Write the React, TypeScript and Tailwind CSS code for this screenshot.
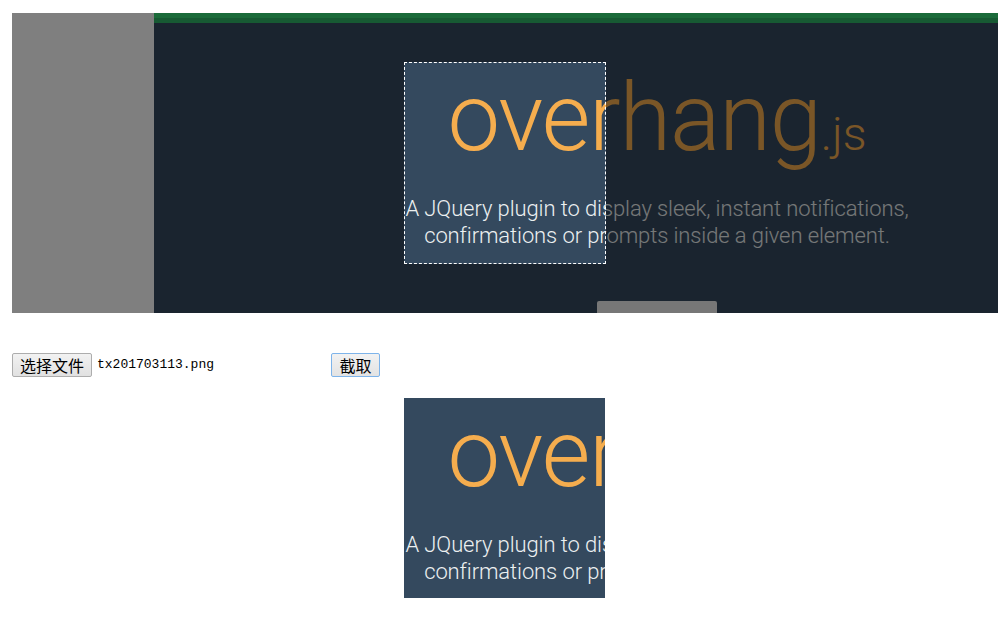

const heroFont = { fontFamily: 'Roboto, "Liberation Sans", sans-serif' };

function SourceImage() {
  return (
    <div className="flex h-[300px] w-[1006px] flex-col items-center bg-[#34495e]" style={heroFont}>
      <div className="h-[5px] w-full shrink-0 bg-[#36d674]" />
      <div className="h-[5px] w-full shrink-0 bg-[#2eb466]" />
      <h1 className="mt-[48px] text-[94px] font-light leading-[94px] tracking-[-1.2px] text-[#f5ad4e]">
        overhang<span className="text-[47px] tracking-normal">.js</span>
      </h1>
      <p className="mt-[14px] text-center text-[22px] font-light leading-[27px] tracking-[-0.1px] text-[#ecf0f1]">
        A JQuery plugin to display sleek, instant notifications,
        <br />
        confirmations or prompts inside a given element.
      </p>
      <div className="mt-[52px] h-[20px] w-[120px] shrink-0 rounded-t-[2px] bg-[#eeeeee]" />
    </div>
  );
}

function CropCanvas() {
  return (
    <div className="relative h-[300px] w-[986px] overflow-hidden bg-white">
      <div className="absolute left-[142px] top-0">
        <SourceImage />
      </div>
      <div className="absolute inset-0 bg-black/50" />
      {/* selection window shows the source undimmed */}
      <div className="absolute left-[392px] top-[49px] h-[202px] w-[202px] overflow-hidden">
        <div className="absolute left-[-250px] top-[-49px]">
          <SourceImage />
        </div>
        <div className="absolute inset-0 border border-dashed border-white" />
      </div>
    </div>
  );
}

function Preview() {
  return (
    <div className="relative h-[200px] w-[201px] overflow-hidden">
      <div className="absolute left-[-250px] top-[-49px]">
        <SourceImage />
      </div>
    </div>
  );
}

export default function App() {
  return (
    <div className="min-h-[621px] bg-white pl-[12px] pt-[13px]">
      <CropCanvas />
      <div className="mt-[40px] flex h-[24px] items-center">
        <button
          type="button"
          className="h-[24px] w-[80px] rounded-[2px] border border-[#adadad] bg-gradient-to-b from-[#f2f2f2] to-[#e1e1e1] text-[16px] leading-none text-black"
          style={{ fontFamily: '"Noto Sans CJK SC", sans-serif' }}
        >
          选择文件
        </button>
        <span className="ml-[5px] w-[234px] text-[13px] text-black" style={{ fontFamily: '"Liberation Mono", monospace' }}>
          tx201703113.png
        </span>
        <button
          type="button"
          className="h-[24px] w-[49px] rounded-[2px] border border-[#7eb4ea] bg-gradient-to-b from-[#f2f2f2] to-[#e3e3e3] text-[16px] leading-none text-black"
          style={{ fontFamily: '"Noto Sans CJK SC", sans-serif' }}
        >
          截取
        </button>
      </div>
      <div className="ml-[392px] mt-[21px]">
        <Preview />
      </div>
    </div>
  );
}
